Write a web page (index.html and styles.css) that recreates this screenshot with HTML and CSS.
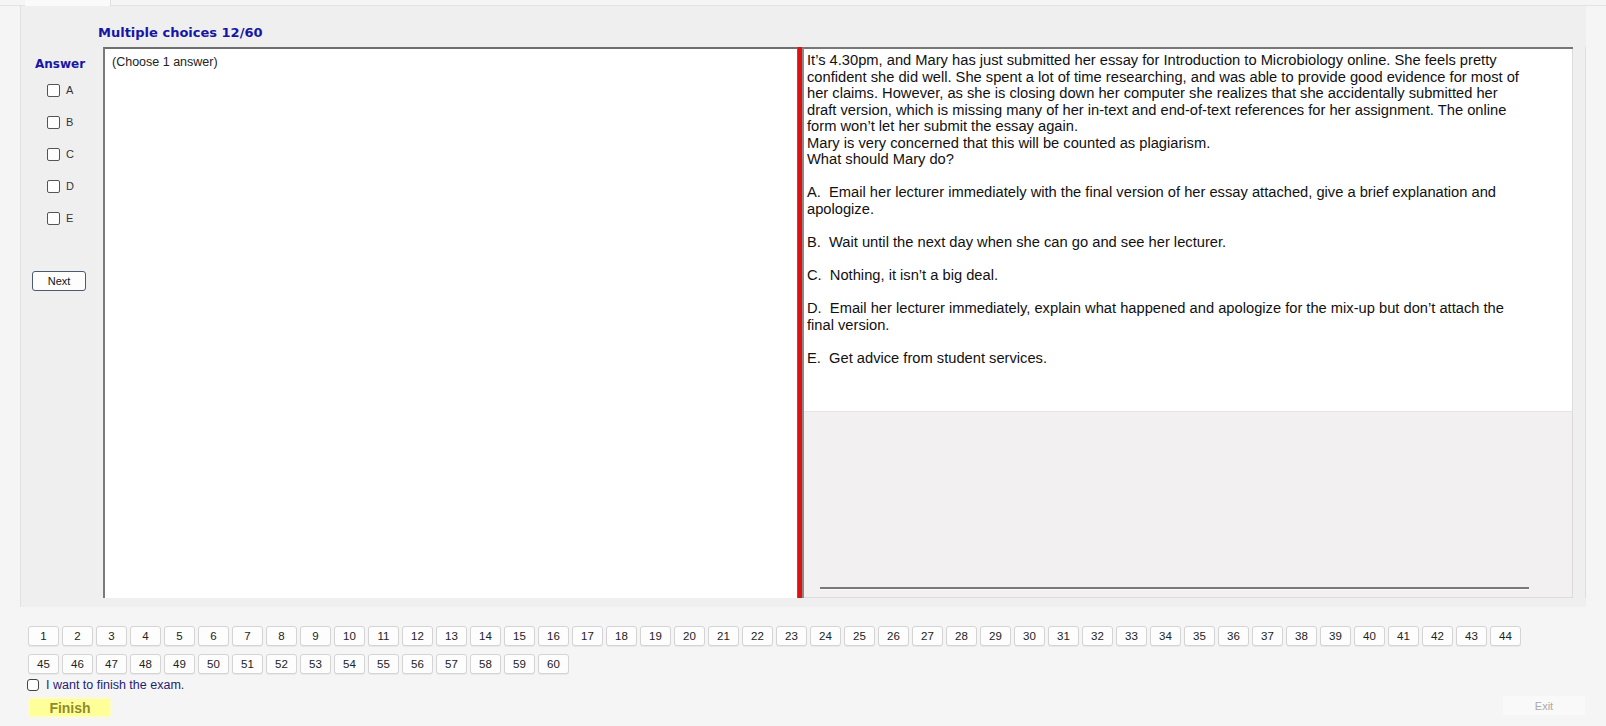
FILE: index.html
```html
<!DOCTYPE html>
<html>
<head>
<meta charset="utf-8">
<link rel="stylesheet" href="styles.css">
</head>
<body>
<div class="app">
  <div class="tabstrip"><div class="tab"></div></div>
  <div class="panel">
    <div class="title">Multiple choices 12/60</div>
    <div class="content">
      <div class="answers">
        <div class="answer-head">Answer</div>
        <label class="opt"><span class="cb"></span>A</label>
        <label class="opt"><span class="cb"></span>B</label>
        <label class="opt"><span class="cb"></span>C</label>
        <label class="opt"><span class="cb"></span>D</label>
        <label class="opt"><span class="cb"></span>E</label>
        <div class="next">Next</div>
      </div>
      <div class="notes">(Choose 1 answer)</div>
      <div class="splitter"></div>
      <div class="question">
        <div class="qtext">
          <p>It’s 4.30pm, and Mary has just submitted her essay for Introduction to Microbiology online. She feels pretty<br>confident she did well. She spent a lot of time researching, and was able to provide good evidence for most of<br>her claims. However, as she is closing down her computer she realizes that she accidentally submitted her<br>draft version, which is missing many of her in-text and end-of-text references for her assignment. The online<br>form won’t let her submit the essay again.<br>Mary is very concerned that this will be counted as plagiarism.<br>What should Mary do?</p>
          <p>A.&nbsp; Email her lecturer immediately with the final version of her essay attached, give a brief explanation and<br>apologize.</p>
          <p>B.&nbsp; Wait until the next day when she can go and see her lecturer.</p>
          <p>C.&nbsp; Nothing, it isn’t a big deal.</p>
          <p>D.&nbsp; Email her lecturer immediately, explain what happened and apologize for the mix-up but don’t attach the<br>final version.</p>
          <p>E.&nbsp; Get advice from student services.</p>
        </div>
        <div class="qlower"><div class="hscroll"></div></div>
      </div>
      <div class="edge"></div>
    </div>
  </div>
  <div class="footer">
    <div class="qnums">
      <span class="qn">1</span><span class="qn">2</span><span class="qn">3</span><span class="qn">4</span><span class="qn">5</span><span class="qn">6</span><span class="qn">7</span><span class="qn">8</span><span class="qn">9</span><span class="qn">10</span><span class="qn">11</span><span class="qn">12</span><span class="qn">13</span><span class="qn">14</span><span class="qn">15</span><span class="qn">16</span><span class="qn">17</span><span class="qn">18</span><span class="qn">19</span><span class="qn">20</span><span class="qn">21</span><span class="qn">22</span><span class="qn">23</span><span class="qn">24</span><span class="qn">25</span><span class="qn">26</span><span class="qn">27</span><span class="qn">28</span><span class="qn">29</span><span class="qn">30</span><span class="qn">31</span><span class="qn">32</span><span class="qn">33</span><span class="qn">34</span><span class="qn">35</span><span class="qn">36</span><span class="qn">37</span><span class="qn">38</span><span class="qn">39</span><span class="qn">40</span><span class="qn">41</span><span class="qn">42</span><span class="qn">43</span><span class="qn">44</span>
      <span class="qn">45</span><span class="qn">46</span><span class="qn">47</span><span class="qn">48</span><span class="qn">49</span><span class="qn">50</span><span class="qn">51</span><span class="qn">52</span><span class="qn">53</span><span class="qn">54</span><span class="qn">55</span><span class="qn">56</span><span class="qn">57</span><span class="qn">58</span><span class="qn">59</span><span class="qn">60</span>
    </div>
    <label class="finish-check"><span class="cb cb-lg"></span>I want to finish the exam.</label>
    <div class="actions">
      <div class="finish">Finish</div>
      <div class="exit">Exit</div>
    </div>
  </div>
</div>
</body>
</html>
```
FILE: styles.css
```css
html, body {
  margin: 0;
  padding: 0;
}
body {
  background: #f6f5f6;
  font-family: "Liberation Sans", Arial, sans-serif;
  color: #111;
  width: 1606px;
  height: 726px;
  overflow: hidden;
}
.app {
  display: flex;
  flex-direction: column;
}
.tabstrip {
  height: 6px;
  display: flex;
  border-bottom: 1px solid #e4e2e4;
  box-sizing: border-box;
}
.tab {
  margin-left: 25px;
  width: 85px;
  height: 6px;
  background: #fbfafb;
  border-right: 1px solid #e0dee0;
}
.panel {
  margin-left: 20px;
  width: 1566px;
  height: 601px;
  box-sizing: border-box;
  border-left: 1px solid #e2e0e2;
  background: #f0eff0;
  display: flex;
  flex-direction: column;
}
.title {
  margin: 19px 0 0 77px;
  height: 22px;
  font-family: "DejaVu Sans", Verdana, sans-serif;
  font-weight: bold;
  font-size: 13px;
  color: #1616a6;
  line-height: 15px;
}
.content {
  display: flex;
  height: 551px;
}
.answers {
  width: 82px;
  display: flex;
  flex-direction: column;
  align-items: flex-start;
}
.answer-head {
  margin: 10px 0 0 14px;
  font-family: "DejaVu Sans", Verdana, sans-serif;
  font-weight: bold;
  font-size: 12px;
  color: #1616a6;
  height: 17px;
  line-height: 15px;
}
.opt {
  display: flex;
  align-items: center;
  margin-left: 26px;
  height: 32px;
  font-size: 11px;
  color: #333;
  gap: 6px;
}
.cb {
  display: inline-block;
  width: 11px;
  height: 11px;
  border: 1px solid #555;
  border-radius: 2px;
  background: #fff;
}
.next {
  margin: 37px 0 0 11px;
  width: 52px;
  height: 18px;
  border: 1px solid #4a5a70;
  border-radius: 3px;
  background: #fdfdfd;
  font-size: 11px;
  color: #111;
  display: flex;
  align-items: center;
  justify-content: center;
  box-sizing: content-box;
}
.notes {
  width: 694px;
  box-sizing: border-box;
  background: #fff;
  border-top: 2px solid #6e6e6e;
  border-left: 2px solid #7a7a7a;
  padding: 6px 0 0 7px;
  font-size: 12.5px;
  color: #222;
}
.splitter {
  width: 5px;
  background: #e01010;
  border-left: 1px solid #c04040;
  box-sizing: border-box;
}
.question {
  width: 771px;
  display: flex;
  flex-direction: column;
  border-left: 2px solid #8a8a8a;
  border-top: 2px solid #777;
  box-sizing: border-box;
}
.qtext {
  background: #fff;
  height: 362px;
  box-sizing: border-box;
  padding: 3px 0 0 3px;
  font-size: 14.7px;
  line-height: 16.55px;
  color: #111;
  white-space: nowrap;
  border-right: 1px solid #dcdcdc;
}
.qtext p {
  margin: 0 0 16.55px 0;
}
.qlower {
  flex: 1;
  background: #f2f0f1;
  border-top: 1px solid #e6e4e5;
  border-right: 1px solid #dcdadb;
  border-bottom: 1px solid #dcdadb;
  display: flex;
  flex-direction: column;
  justify-content: flex-end;
  padding: 0 0 7px 16px;
}
.hscroll {
  width: 709px;
  height: 2px;
  background: #7a7a7a;
  border-bottom: 1px solid #fafafa;
}
.edge {
  width: 12px;
  border-right: 1px solid #e0dee0;
}
.footer {
  padding: 19px 0 0 28px;
  display: flex;
  flex-direction: column;
}
.qnums {
  display: flex;
  flex-wrap: wrap;
  width: 1500px;
  row-gap: 8px;
  column-gap: 3px;
}
.qn {
  width: 31px;
  height: 20px;
  box-sizing: border-box;
  border: 1px solid #d4d4d4;
  border-radius: 3px;
  background: #fdfdfd;
  font-size: 11.5px;
  color: #222;
  display: flex;
  align-items: center;
  justify-content: center;
  box-shadow: 0 1px 0 #e8e8e8;
}
.finish-check {
  margin: 4px 0 0 -1px;
  display: flex;
  align-items: center;
  gap: 7px;
  font-size: 12.5px;
  color: #1e1e70;
  height: 14px;
}
.cb-lg {
  width: 10px;
  height: 10px;
  border-radius: 3px;
  border-color: #444;
}
.actions {
  margin-top: 4px;
  display: flex;
  justify-content: space-between;
  align-items: flex-start;
  width: 1557px;
}
.finish {
  margin-left: 2px;
  width: 80px;
  height: 17px;
  background: #ffff99;
  box-shadow: 0 0 3px 1px #ffffb8;
  color: #8e8c2a;
  font-weight: bold;
  font-size: 14px;
  display: flex;
  align-items: center;
  justify-content: center;
  margin-top: 3px;
}
.exit {
  width: 82px;
  height: 19px;
  background: #faf9fa;
  color: #aaa;
  font-size: 11px;
  display: flex;
  align-items: center;
  justify-content: center;
}
```
